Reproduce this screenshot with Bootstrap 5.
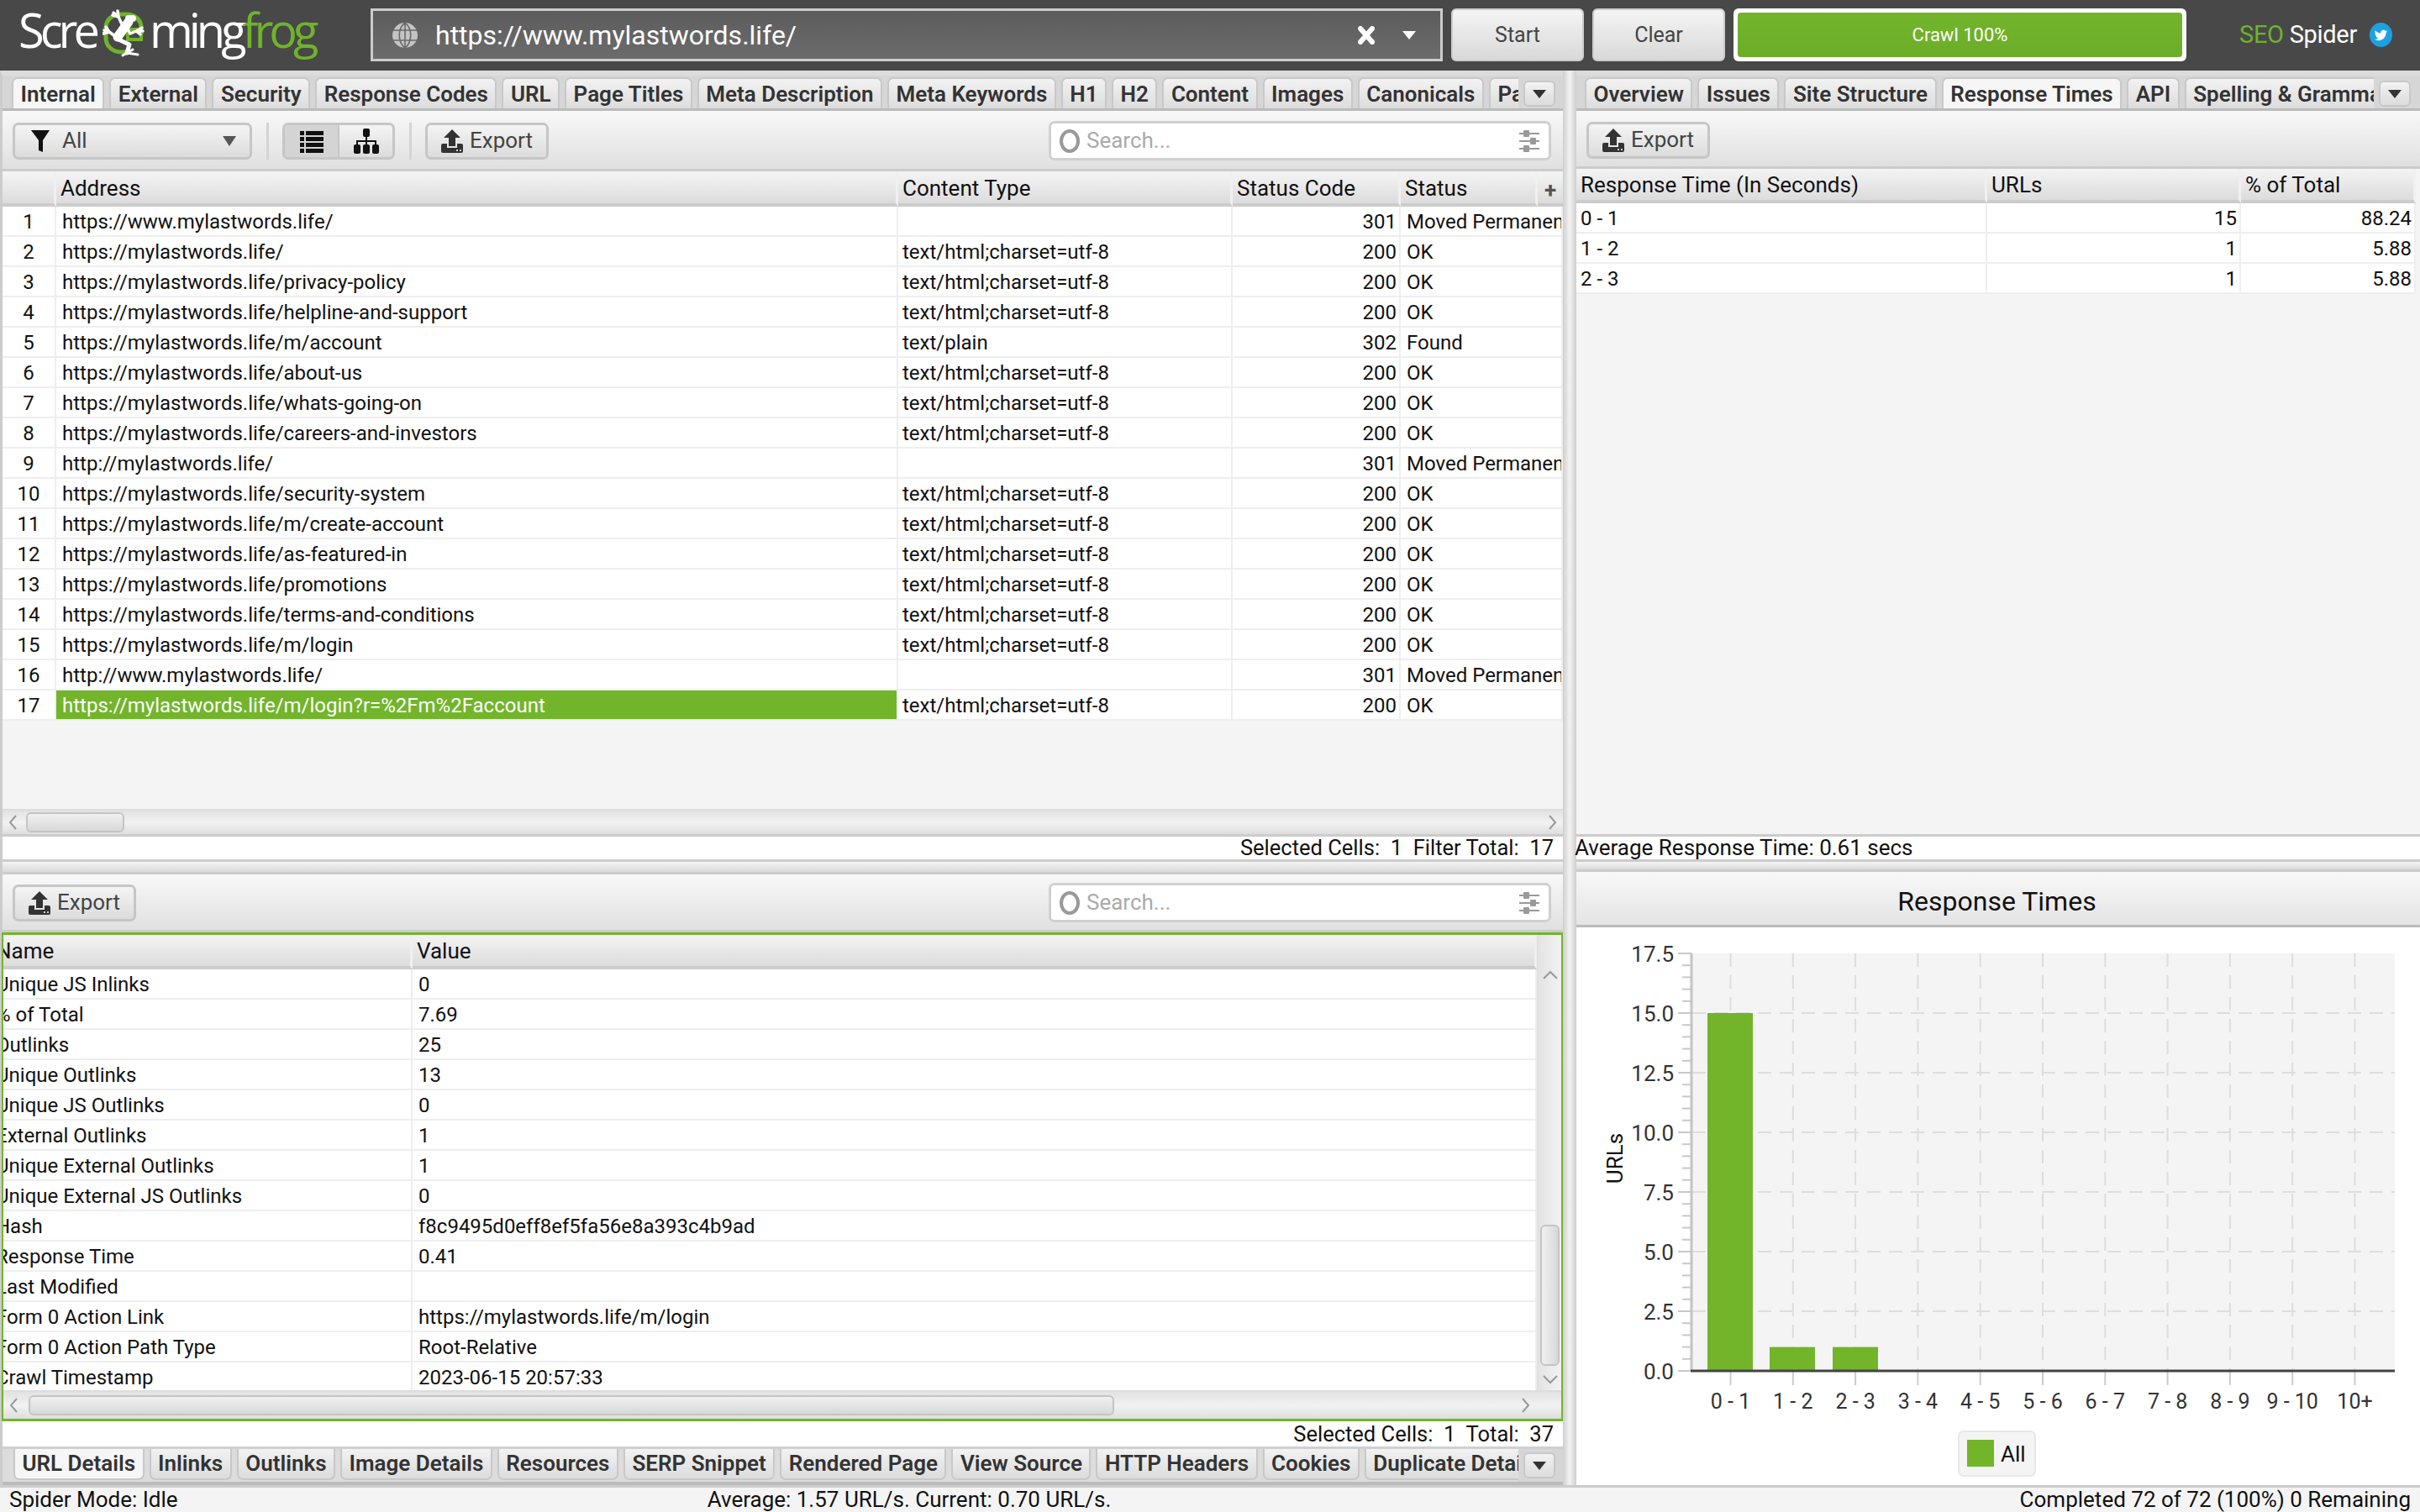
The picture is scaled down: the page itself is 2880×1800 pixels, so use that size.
<!DOCTYPE html>
<html lang="en">
<head>
    <meta charset="UTF-8">
    <title>Screaming Frog SEO Spider</title>
    <link href="https://cdn.jsdelivr.net/npm/bootstrap@5.3.3/dist/css/bootstrap.min.css" rel="stylesheet">
    <style>
        html, body { height: 100%; }
        body { width: 2880px; height: 1800px; overflow: hidden; background: #f4f4f4; font-family: Roboto, "Liberation Sans", sans-serif; font-size: 26px; color: #111; }

        /* top bar */
        .sf-top { height: 84px; background: #484848; padding: 10px 0 11px 22px; align-items: stretch; flex-wrap: nowrap; justify-content: flex-start; }
        .sf-logo { width: 419px; color: #fff; font-family: "Open Sans", sans-serif; font-size: 56px; letter-spacing: -5px; line-height: 60px; white-space: nowrap; margin-top: -5px; }
        .sf-logo b { font-weight: 400; color: #6fb32b; }
        .sf-logo svg { width: 50px; height: 58px; vertical-align: -12px; margin: 0 6px 0 8px; }
        .sf-url { width: 1276px; background: linear-gradient(#5c5c5c, #6c6c6c); border: 3px solid #ccc; padding: 0 29px 0 22px; color: #fff; font-size: 32px; }
        .sf-url svg.globe { width: 32px; height: 32px; margin-right: 20px; }
        .sf-url .sf-caret { border-top-color: #fff; margin-left: 33px; }
        .sf-topbtn { width: 158px; margin-left: 10px; font-size: 25px; color: #444; background: linear-gradient(#f4f4f4, #d9d9d9); border: 2px solid #ccc; border-radius: 6px; padding: 0; }
        .sf-progress { width: 539px; margin-left: 10px; background: #fff; padding: 5px; border-radius: 6px; }
        .sf-progress div { flex: 1; border-radius: 4px; background: linear-gradient(#72b52b, #6cad28); color: #fff; font-size: 22px; }
        .sf-brand { margin-left: 63px; color: #fff; font-size: 29px; letter-spacing: -.3px; white-space: nowrap; }
        .sf-brand span { color: #6fb32b; }
        .sf-brand svg { width: 29px; height: 29px; margin-left: 14px; }

        /* panes */
        .sf-main { height: 1684px; }
        .sf-pane-l { width: 1860px; border-left: 3px solid #ccc; border-top: 6px solid #dcdcdc; }
        .sf-split { width: 16px; background: linear-gradient(90deg, #cfcfcf, #f2f2f2 50%, #cfcfcf); }
        .sf-pane-r { width: 1004px; border-top: 6px solid #dcdcdc; }

        /* tabs */
        .sf-tabs { height: 42px; flex-wrap: nowrap; overflow: hidden; gap: 6px; padding: 2px 0 0 11px; background: #d6d6d6; border-bottom: 3px solid #bbb; position: relative; }
        .sf-tabs .nav-item { flex: none; }
        .sf-tabs .nav-link { height: 38px; line-height: 37px; padding: 0 8.5px; margin: 0; font-size: 26px; font-weight: 600; color: #333; background: linear-gradient(#f2f2f2, #dcdcdc); border: 2px solid #c8c8c8; border-bottom: 0; border-radius: 7px 7px 0 0; white-space: nowrap; }
        .sf-tabs .nav-link.active { height: 40px; color: #333; background: #f6f6f6; border-color: #c8c8c8; }
        .sf-tabs-r { padding-left: 10px; }
        .sf-more { position: absolute; top: 0; right: 0; width: 53px; height: 39px; background: #d6d6d6; padding: 6px 9px 2px 6px; }
        .sf-tabs-r .sf-more { width: 55px; padding-right: 11px; }
        .sf-more span { display: flex; align-items: center; justify-content: center; height: 31px; background: linear-gradient(#f2f2f2, #dcdcdc); border: 2px solid #c8c8c8; border-radius: 6px; }
        .sf-more i, .sf-caret { display: block; width: 0; height: 0; border-left: 8px solid transparent; border-right: 8px solid transparent; border-top: 10px solid #333; }
        .sf-tabs-b { height: 46px; padding: 0 0 0 13px; border-top: 3px solid #d0d0d0; border-bottom: 4px solid #bbb; background: #dcdcdc; }
        .sf-tabs-b .nav-link { height: 37px; border: 2px solid #c8c8c8; border-top: 0; border-radius: 0 0 7px 7px; line-height: 35px; }
        .sf-tabs-b .nav-link.active { height: 37px; }
        .sf-tabs-b .sf-more { padding-top: 4px; height: 39px; }

        /* toolbars */
        .sf-bar { height: 72px; padding: 2px 14px 0 12px; background: linear-gradient(#f8f8f8, #e0e0e0); border-bottom: 3px solid #ccc; gap: 0; }
        .sf-bar-r { height: 69px; padding-top: 3px; padding-left: 12px; }
        .sf-bar-low { height: 69px; padding-top: 1px; }
        .sf-btn { height: 44px; padding: 0; font-size: 26px; color: #444; background: linear-gradient(#f4f4f4, #dcdcdc); border: 3px solid #c6c6c6; border-radius: 7px; }
        .sf-btn:hover { background: #ddd; }
        .sf-export { width: 147px; }
        .sf-export svg { width: 26px; height: 28px; margin-right: 8px; }
        .sf-filter { width: 285px; justify-content: flex-start; padding: 0 16px 0 18px; }
        .sf-filter svg { width: 24px; height: 28px; margin-right: 14px; }
        .sf-filter .sf-caret { margin-left: auto; border-top-color: #555; border-top-width: 12px; }
        .sf-vr { width: 3px; height: 44px; background: #d4d4d4; margin: 0 16px 0 17px; }
        .sf-toggle { width: 134px; height: 44px; border: 3px solid #c6c6c6; border-radius: 7px; background: linear-gradient(#f4f4f4, #dcdcdc); overflow: hidden; }
        .sf-toggle div { flex: 1; height: 100%; }
        .sf-toggle div:first-child { background: #d4d4d4; border-right: 2px solid #c6c6c6; }
        .sf-toggle svg { width: 30px; height: 30px; }
        .sf-search { width: 598px; height: 47px; margin-left: auto; background: #fff; border: 3px solid #d0d0d0; border-radius: 7px; padding: 0 8px 0 10px; color: #aaa; font-size: 26px; }
        .sf-search .ring { width: 24px; height: 28px; border: 4px solid #999; border-radius: 50%; margin-right: 8px; }
        .sf-search svg { width: 30px; height: 30px; margin-left: auto; }

        /* tables */
        .sf-table { table-layout: fixed; margin: 0; border-collapse: separate; border-spacing: 0; color: #111; background: #fff; }
        .sf-table-main { width: 1857px; }
        .sf-table-main .c1 { width: 64px; }
        .sf-table-main .c2 { width: 1002px; }
        .sf-table-main .c3 { width: 398px; }
        .sf-table-main .c4 { width: 200px; }
        .sf-table-main .c5 { width: 163px; }
        .sf-table-resp { width: 999px; }
        .sf-table-resp .c1 { width: 489px; }
        .sf-table-resp .c2 { width: 302px; }
        .sf-table-detail .c1 { width: 487px; }
        .sf-table th, .sf-table td { height: 36px; padding: 2px 5px 0; line-height: 32px; white-space: nowrap; overflow: hidden; font-weight: 400; border: 0; border-right: 2px solid #eee; border-bottom: 2px solid #eee; box-shadow: none; font-size: 24px; }
        .sf-table th { height: 41px; padding: 0 5px 2px; font-size: 26px; background: linear-gradient(#f4f4f4, #dcdcdc); border-right: 3px solid #f0f0f0; border-bottom: 4px solid #ccc; color: #111; }
        .sf-table td.text-end { padding-right: 3px; }
        .sf-table td.sf-n { text-align: center; padding: 2px 0 0; }
        .sf-table td.sf-addr { padding-left: 7px; }
        .sf-table td.sf-stat { padding-left: 7px; }
        .sf-table td.sf-sel { background: #72b52b; color: #fff; --bs-table-bg-state: #72b52b; }
        .sf-table th.sf-plus { font-weight: 700; color: #555; text-align: center; padding: 0; border-right: 0; }
        .sf-cut td:first-child, .sf-cut th:first-child { text-indent: -14px; }
        .sf-cut td + td { padding-left: 7px; }

        .sf-gap-t { height: 1px; background: #f4f4f4; }
        .sf-empty { background: #f4f4f4; flex: 1; min-height: 0; overflow: hidden; }
        .sf-hbar { height: 30px; background: linear-gradient(#e2e2e2, #f2f2f2 50%, #dedede); border-top: 2px solid #ddd; padding: 0 6px 0 6px; color: #888; }
        .sf-hbar-low { height: 34px; }
        .sf-thumb { height: 24px; background: linear-gradient(#f0f0f0, #d8d8d8); border: 2px solid #c4c4c4; border-radius: 6px; }
        .sf-thumb-a { width: 117px; margin-left: 8px; }
        .sf-thumb-b { width: 1292px; margin-left: 10px; }
        .sf-arrow { width: 14px; height: 20px; flex: none; }
        .sf-arrow-low { margin-right: 30px; }
        .sf-status { height: 33px; background: #fff; border-top: 3px solid #ccc; border-bottom: 3px solid #ccc; padding: 0 11px 0 0; line-height: 27px; font-size: 25.5px; white-space: pre; text-align: right; }
        .sf-status-b { height: 30px; border-top: 0; border-bottom: 0; line-height: 30px; }
        .sf-status-r { text-align: left; padding: 0; text-indent: -2px; font-size: 26px; }
        .sf-hsplit { height: 15px; background: linear-gradient(#f4f4f4, #dadada); border-bottom: 3px solid #ccc; }
        .sf-hsplit-r { height: 12px; }

        /* lower left */
        .sf-green { height: 582px; margin-left: -1px; border: 3px solid #72b52b; border-left-width: 2px; border-right-width: 2px; }
        .sf-green-body { height: 542px; }
        .sf-vbar { width: 29px; flex: none; background: linear-gradient(90deg, #e4e4e4, #f2f2f2); color: #888; border-left: 2px solid #e0e0e0; }
        .sf-vbar svg { width: 20px; height: 14px; flex: none; }
        .sf-up { margin-top: 41px; }
        .sf-vthumb { width: 23px; height: 168px; margin: 290px auto 0; background: linear-gradient(90deg, #f0f0f0, #d8d8d8); border: 2px solid #c4c4c4; border-radius: 6px; }
        .sf-down { margin-top: 9px; }

        /* chart */
        .sf-title { height: 66px; padding-top: 6px; color: #111; background: linear-gradient(#f8f8f8, #e4e4e4); border-bottom: 3px solid #bbb; font-size: 32px; text-indent: -3px; }
        .sf-chart { background: #fff; height: 664px; }
        .sf-chart svg { display: block; font-family: Roboto, sans-serif; }

        /* status bar */
        .sf-foot { height: 32px; background: #f4f4f4; border-top: 3px solid #ccc; padding: 0 11px; font-size: 26px; line-height: 28px; }
        .sf-foot-mid { margin-left: 630px; }
    </style>
</head>
<body>
    <svg width="0" height="0" class="position-absolute">
        <symbol id="i-upload" viewBox="0 0 26 28">
            <path fill="#333" d="M13 0 23 10H17V20H9V10H3Z"/>
            <path fill="#333" d="M2 17H7V22H19V17H24Q26 17 26 19V26Q26 28 24 28H2Q0 28 0 26V19Q0 17 2 17Z"/>
            <rect x="18" y="24" width="2" height="2" fill="#ccc"/><rect x="22" y="24" width="2" height="2" fill="#ccc"/>
        </symbol>
        <symbol id="i-sliders" viewBox="0 0 30 30">
            <g fill="#999"><rect x="3" y="5" width="24" height="2"/><rect x="3" y="14" width="24" height="2"/><rect x="3" y="23" width="24" height="2"/>
            <rect x="8" y="2" width="7" height="8" rx="1"/><rect x="16" y="11" width="7" height="8" rx="1"/><rect x="8" y="20" width="7" height="8" rx="1"/></g>
        </symbol>
    </svg>

    <nav class="navbar sf-top">
        <div class="sf-logo">Scre<svg viewBox="0 0 50 58">
                <path d="M46 30V22C46 12 38 6 28 6H22C12 6 4 12 4 22V34C4 44 12 51 22 51H32" fill="none" stroke="#6fb32b" stroke-width="5"/>
                <path d="M30 24H46V36H30Z" fill="none" stroke="#6fb32b" stroke-width="4"/>
                <g fill="none" stroke="#fff" stroke-linecap="round" stroke-linejoin="round">
                    <path stroke-width="11" d="M31 15 18 33"/>
                    <path stroke-width="8" d="M31 11H36"/>
                    <path stroke-width="3.5" d="M24 20 19 9 13 4M19 9 12 7M19 9 18 2"/>
                    <path stroke-width="3.5" d="M29 22 33 29 40 26M40 26 47 22M40 26 48 26M40 26 45 30"/>
                    <path stroke-width="3.5" d="M15 32 8 27 2 25M8 27 1 29M8 27 4 21"/>
                    <path stroke-width="5" d="M19 36 32 42 29 52"/>
                    <path stroke-width="3" d="M29 52 42 54M29 52 36 48M29 52 24 55"/>
                </g>
            </svg>ming<b>frog</b></div>
        <div class="sf-url d-flex align-items-center">
            <svg class="globe" viewBox="0 0 32 32" fill="none"><circle cx="16" cy="16" r="15" fill="#c4c4c4"/><path stroke="#6a6a6a" stroke-width="1.6" d="M16 1V31M2 10H30M2 22H30M16 1C7 8 7 24 16 31M16 1C25 8 25 24 16 31"/></svg>
            <span>https://www.mylastwords.life/</span>
            <svg class="ms-auto" width="20" height="22" viewBox="0 0 20 22"><path d="M3 3 17 19M17 3 3 19" stroke="#fff" stroke-width="6" stroke-linecap="round"/></svg>
            <i class="sf-caret"></i>
        </div>
        <button class="btn sf-topbtn">Start</button>
        <button class="btn sf-topbtn">Clear</button>
        <div class="sf-progress d-flex"><div class="d-flex align-items-center justify-content-center">Crawl 100%</div></div>
        <div class="sf-brand d-flex align-items-center"><div><span>SEO</span> Spider</div>
            <svg viewBox="0 0 30 30"><ellipse cx="15" cy="15" rx="14" ry="15" fill="#1da1e2"/><path fill="#fff" transform="translate(7 7.5) scale(.66)" d="M23.953 4.57a10 10 0 01-2.825.775 4.958 4.958 0 002.163-2.723c-.951.555-2.005.959-3.127 1.184a4.92 4.92 0 00-8.384 4.482C7.69 8.095 4.067 6.13 1.64 3.162a4.822 4.822 0 00-.666 2.475c0 1.71.87 3.213 2.188 4.096a4.904 4.904 0 01-2.228-.616v.06a4.923 4.923 0 003.946 4.827 4.996 4.996 0 01-2.212.085 4.936 4.936 0 004.604 3.417 9.867 9.867 0 01-6.102 2.105c-.39 0-.779-.023-1.17-.067a13.995 13.995 0 007.557 2.209c9.053 0 13.998-7.496 13.998-13.985 0-.21 0-.42-.015-.63A9.935 9.935 0 0024 4.59z"/></svg>
        </div>
    </nav>

    <div class="d-flex sf-main">
        <div class="sf-pane-l d-flex flex-column">
            <ul class="nav nav-tabs sf-tabs" id="tabs-main"></ul>
            <div class="sf-bar d-flex align-items-center">
                <button class="btn sf-btn sf-filter d-flex align-items-center">
                    <svg viewBox="0 0 24 28"><path fill="#111" d="M1 1H23L15 13V27L10 25V13Z"/></svg>All<i class="sf-caret"></i>
                </button>
                <div class="sf-vr"></div>
                <div class="sf-toggle d-flex">
                    <div class="d-flex align-items-center justify-content-center"><svg viewBox="0 0 30 30" fill="#111"><rect x="1" y="3" width="5" height="5"/><rect x="8" y="3" width="21" height="5"/><rect x="1" y="10" width="5" height="5"/><rect x="8" y="10" width="21" height="5"/><rect x="1" y="17" width="5" height="5"/><rect x="8" y="17" width="21" height="5"/><rect x="1" y="24" width="5" height="5"/><rect x="8" y="24" width="21" height="5"/></svg></div>
                    <div class="d-flex align-items-center justify-content-center"><svg viewBox="0 0 30 30" fill="#111"><rect x="11" y="0" width="8" height="10" rx="2"/><path d="M14 10H16V14H27V19H25V16H16V19H14V16H5V19H3V14H14Z"/><rect x="0" y="19" width="8" height="11" rx="2"/><rect x="11" y="19" width="8" height="11" rx="2"/><rect x="22" y="19" width="8" height="11" rx="2"/></svg></div>
                </div>
                <div class="sf-vr"></div>
                <button class="btn sf-btn sf-export d-flex align-items-center justify-content-center"><svg><use href="#i-upload"/></svg>Export</button>
                <div class="sf-search d-flex align-items-center"><div class="ring"></div>Search...<svg><use href="#i-sliders"/></svg></div>
            </div>
            <div class="sf-gap-t"></div>
            <table class="table sf-table sf-table-main">
                <colgroup><col class="c1"><col class="c2"><col class="c3"><col class="c4"><col class="c5"><col></colgroup>
                <thead><tr><th></th><th>Address</th><th>Content Type</th><th>Status Code</th><th>Status</th><th class="sf-plus">+</th></tr></thead>
                <tbody id="rows-main"></tbody>
            </table>
            <div class="sf-empty"></div>
            <div class="sf-hbar d-flex align-items-center">
                <svg class="sf-arrow" viewBox="0 0 14 20" fill="none" stroke="#999" stroke-width="2"><path d="M10 2 3 10l7 8"/></svg>
                <div class="sf-thumb sf-thumb-a"></div>
                <svg class="sf-arrow ms-auto" viewBox="0 0 14 20" fill="none" stroke="#999" stroke-width="2"><path d="M4 2l7 8-7 8"/></svg>
            </div>
            <div class="sf-status">Selected Cells:  1  Filter Total:  17</div>
            <div class="sf-hsplit"></div>
            <div class="sf-bar sf-bar-low d-flex align-items-center">
                <button class="btn sf-btn sf-export d-flex align-items-center justify-content-center"><svg><use href="#i-upload"/></svg>Export</button>
                <div class="sf-search d-flex align-items-center"><div class="ring"></div>Search...<svg><use href="#i-sliders"/></svg></div>
            </div>
            <div class="sf-green">
                <div class="d-flex sf-green-body">
                    <div class="flex-grow-1 overflow-hidden">
                        <table class="table sf-table sf-table-detail sf-cut">
                            <colgroup><col class="c1"><col></colgroup>
                            <thead><tr><th>Name</th><th>Value</th></tr></thead>
                            <tbody id="rows-detail"></tbody>
                        </table>
                    </div>
                    <div class="sf-vbar d-flex flex-column align-items-center">
                        <svg class="sf-up" viewBox="0 0 20 14" fill="none" stroke="#999" stroke-width="2"><path d="M2 11 10 3l8 8"/></svg>
                        <div class="sf-vthumb"></div>
                        <svg class="sf-down" viewBox="0 0 20 14" fill="none" stroke="#999" stroke-width="2"><path d="M2 3l8 8 8-8"/></svg>
                    </div>
                </div>
                <div class="sf-hbar sf-hbar-low d-flex align-items-center">
                    <svg class="sf-arrow" viewBox="0 0 14 20" fill="none" stroke="#999" stroke-width="2"><path d="M10 2 3 10l7 8"/></svg>
                    <div class="sf-thumb sf-thumb-b"></div>
                    <svg class="sf-arrow sf-arrow-low ms-auto" viewBox="0 0 14 20" fill="none" stroke="#999" stroke-width="2"><path d="M4 2l7 8-7 8"/></svg>
                </div>
            </div>
            <div class="sf-status sf-status-b">Selected Cells:  1  Total:  37</div>
            <ul class="nav nav-tabs sf-tabs sf-tabs-b" id="tabs-lower"></ul>
        </div>

        <div class="sf-split"></div>

        <div class="sf-pane-r d-flex flex-column">
            <ul class="nav nav-tabs sf-tabs sf-tabs-r" id="tabs-right"></ul>
            <div class="sf-bar sf-bar-r d-flex align-items-center">
                <button class="btn sf-btn sf-export d-flex align-items-center justify-content-center"><svg><use href="#i-upload"/></svg>Export</button>
            </div>
            <table class="table sf-table sf-table-resp">
                <colgroup><col class="c1"><col class="c2"><col></colgroup>
                <thead><tr><th>Response Time (In Seconds)</th><th>URLs</th><th>% of Total</th></tr></thead>
                <tbody>
                    <tr><td>0 - 1</td><td class="text-end">15</td><td class="text-end">88.24</td></tr>
                    <tr><td>1 - 2</td><td class="text-end">1</td><td class="text-end">5.88</td></tr>
                    <tr><td>2 - 3</td><td class="text-end">1</td><td class="text-end">5.88</td></tr>
                </tbody>
            </table>
            <div class="sf-empty"></div>
            <div class="sf-status sf-status-r">Average Response Time: 0.61 secs</div>
            <div class="sf-hsplit sf-hsplit-r"></div>
            <div class="sf-title d-flex align-items-center justify-content-center">Response Times</div>
            <div class="sf-chart"><svg id="chart" width="1004" height="664" viewBox="1876 1104 1004 664"></svg></div>
        </div>
    </div>

    <div class="sf-foot d-flex">
        <span>Spider Mode: Idle</span>
        <span class="sf-foot-mid">Average: 1.57 URL/s. Current: 0.70 URL/s.</span>
        <span class="ms-auto">Completed 72 of 72 (100%) 0 Remaining</span>
    </div>

    <script src="https://cdn.jsdelivr.net/npm/bootstrap@5.3.3/dist/js/bootstrap.bundle.min.js"></script>
    <script>
        const more = '<li class="sf-more"><span><i></i></span></li>';
        const renderTabs = (id, names, active) => {
            document.getElementById(id).innerHTML = names
                .map(n => `<li class="nav-item"><a class="nav-link${n === active ? ' active' : ''}" href="#">${n}</a></li>`)
                .join('') + more;
        };
        renderTabs('tabs-main', ['Internal', 'External', 'Security', 'Response Codes', 'URL', 'Page Titles', 'Meta Description', 'Meta Keywords', 'H1', 'H2', 'Content', 'Images', 'Canonicals', 'Pagination'], 'Internal');
        renderTabs('tabs-right', ['Overview', 'Issues', 'Site Structure', 'Response Times', 'API', 'Spelling &amp; Grammar'], 'Response Times');
        renderTabs('tabs-lower', ['URL Details', 'Inlinks', 'Outlinks', 'Image Details', 'Resources', 'SERP Snippet', 'Rendered Page', 'View Source', 'HTTP Headers', 'Cookies', 'Duplicate Details'], 'URL Details');

        const html = 'text/html;charset=utf-8';
        const rows = [
            ['https://www.mylastwords.life/', '', 301, 'Moved Permanently'],
            ['https://mylastwords.life/', html, 200, 'OK'],
            ['https://mylastwords.life/privacy-policy', html, 200, 'OK'],
            ['https://mylastwords.life/helpline-and-support', html, 200, 'OK'],
            ['https://mylastwords.life/m/account', 'text/plain', 302, 'Found'],
            ['https://mylastwords.life/about-us', html, 200, 'OK'],
            ['https://mylastwords.life/whats-going-on', html, 200, 'OK'],
            ['https://mylastwords.life/careers-and-investors', html, 200, 'OK'],
            ['http://mylastwords.life/', '', 301, 'Moved Permanently'],
            ['https://mylastwords.life/security-system', html, 200, 'OK'],
            ['https://mylastwords.life/m/create-account', html, 200, 'OK'],
            ['https://mylastwords.life/as-featured-in', html, 200, 'OK'],
            ['https://mylastwords.life/promotions', html, 200, 'OK'],
            ['https://mylastwords.life/terms-and-conditions', html, 200, 'OK'],
            ['https://mylastwords.life/m/login', html, 200, 'OK'],
            ['http://www.mylastwords.life/', '', 301, 'Moved Permanently'],
            ['https://mylastwords.life/m/login?r=%2Fm%2Faccount', html, 200, 'OK']
        ];
        document.getElementById('rows-main').innerHTML = rows.map((r, i) =>
            `<tr><td class="sf-n">${i + 1}</td><td class="sf-addr${i === 16 ? ' sf-sel' : ''}">${r[0]}</td><td>${r[1]}</td><td class="text-end">${r[2]}</td><td class="sf-stat" colspan="2">${r[3]}</td></tr>`
        ).join('');

        const detail = [
            ['Unique JS Inlinks', '0'], ['% of Total', '7.69'], ['Outlinks', '25'], ['Unique Outlinks', '13'],
            ['Unique JS Outlinks', '0'], ['External Outlinks', '1'], ['Unique External Outlinks', '1'],
            ['Unique External JS Outlinks', '0'], ['Hash', 'f8c9495d0eff8ef5fa56e8a393c4b9ad'], ['Response Time', '0.41'],
            ['Last Modified', ''], ['Form 0 Action Link', 'https://mylastwords.life/m/login'],
            ['Form 0 Action Path Type', 'Root-Relative'], ['Crawl Timestamp', '2023-06-15 20:57:33']
        ];
        document.getElementById('rows-detail').innerHTML = detail.map(r => `<tr><td>${r[0]}</td><td>${r[1]}</td></tr>`).join('');

        // chart, coordinates in page pixels (viewBox starts at the pane corner)
        let s = '<rect x="2014" y="1135" width="836" height="497" fill="#f4f4f4"/>';
        const labels = ['0 - 1', '1 - 2', '2 - 3', '3 - 4', '4 - 5', '5 - 6', '6 - 7', '7 - 8', '8 - 9', '9 - 10', '10+'];
        const yAt = v => 1632 - v * 28.4;
        labels.forEach((l, i) => {
            const x = 2059.5 + i * 74.3;
            s += `<line x1="${x}" x2="${x}" y1="1135" y2="1632" stroke="#ddd" stroke-width="2" stroke-dasharray="16 10"/>`;
            s += `<line x1="${x}" x2="${x}" y1="1633" y2="1649" stroke="#ccc" stroke-width="2"/>`;
            s += `<text x="${x}" y="1677" text-anchor="middle" font-size="25" fill="#333">${l}</text>`;
        });
        for (let v = 0; v <= 17.5; v += 0.5) {
            const y = yAt(v);
            const major = v % 2.5 === 0;
            if (major && v > 0 && v < 17.5) s += `<line x1="2014" x2="2850" y1="${y}" y2="${y}" stroke="#ddd" stroke-width="2" stroke-dasharray="16 10"/>`;
            s += `<line x1="${major ? 1997 : 2002}" x2="2013" y1="${y}" y2="${y}" stroke="#c8c8c8" stroke-width="2"/>`;
            if (major) s += `<text x="1992" y="${y + 10}" text-anchor="end" font-size="26" fill="#333">${v.toFixed(1)}</text>`;
        }
        [[2032, 15], [2106, 1], [2181, 1]].forEach(([x, v]) => {
            s += `<rect x="${x}" y="${yAt(v)}" width="54" height="${v * 28.4}" fill="#72b52b"/>`;
        });
        s += '<line x1="2013" x2="2013" y1="1135" y2="1633" stroke="#c4c4c4" stroke-width="3"/>';
        s += '<line x1="2012" x2="2850" y1="1632" y2="1632" stroke="#444" stroke-width="3"/>';
        s += '<text transform="translate(1931 1379) rotate(-90)" text-anchor="middle" font-size="26" fill="#111">URLs</text>';
        s += '<rect x="2331" y="1704" width="91" height="53" rx="6" fill="#f4f4f4" stroke="#e8e8e8" stroke-width="2"/>';
        s += '<rect x="2341" y="1714" width="32" height="32" fill="#72b52b"/>';
        s += '<text x="2381" y="1740" font-size="26" fill="#111">All</text>';
        document.getElementById('chart').innerHTML = s;
    </script>
</body>
</html>
